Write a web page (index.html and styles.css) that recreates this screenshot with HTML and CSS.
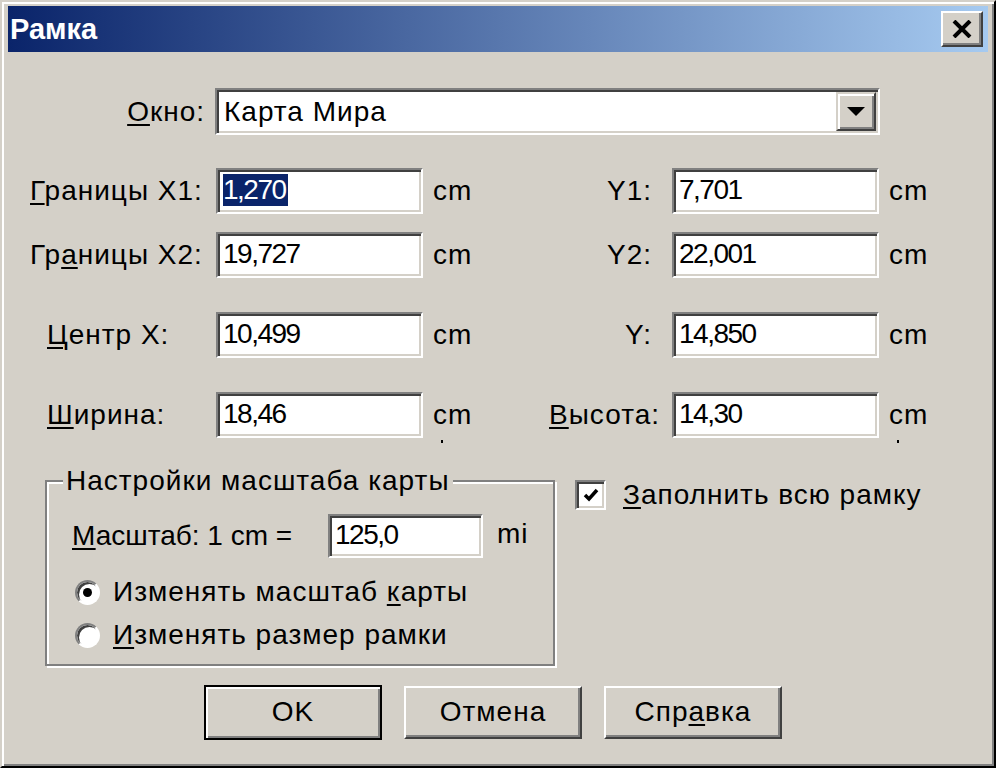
FILE: index.html
```html
<!DOCTYPE html>
<html lang="ru">
<head>
  <meta charset="UTF-8" />
  <title>Рамка</title>
  <link rel="stylesheet" href="styles.css">
</head>
<body>

  <div class="window">
    <div class="titlebar">
      <span class="title">Рамка</span>
      <span class="close-btn">
        <svg width="20" height="18" viewBox="0 0 20 18"><path d="M2 1 L18 17 M18 1 L2 17" stroke="#000" stroke-width="4"/></svg>
      </span>
    </div>

    <div class="body">
      <div class="combo-row">
        <span class="combo-label"><u>О</u>кно:</span>
        <div class="combo">
          <span class="combo-text">Карта Мира</span>
          <span class="combo-btn">
            <svg width="18" height="10" viewBox="0 0 18 10"><polygon points="0,0 18,0 9,9" fill="#000"/></svg>
          </span>
        </div>
      </div>

      <div class="row first">
        <span class="lbl"><u>Г</u>раницы X1:</span>
        <div class="field"><span class="sel">1,270</span></div>
        <span class="unit">cm</span>
        <span class="lbl-r">Y1:</span>
        <div class="field">7,701</div>
        <span class="unit">cm</span>
      </div>

      <div class="row">
        <span class="lbl">Гр<u>а</u>ницы X2:</span>
        <div class="field">19,727</div>
        <span class="unit">cm</span>
        <span class="lbl-r">Y2:</span>
        <div class="field">22,001</div>
        <span class="unit">cm</span>
      </div>

      <div class="row wide">
        <span class="lbl indent"><u>Ц</u>ентр X:</span>
        <div class="field">10,499</div>
        <span class="unit">cm</span>
        <span class="lbl-r">Y:</span>
        <div class="field">14,850</div>
        <span class="unit">cm</span>
      </div>

      <div class="row wide">
        <span class="lbl indent"><u>Ш</u>ирина:</span>
        <div class="field">18,46</div>
        <span class="unit dotted">cm</span>
        <span class="lbl-r tight"><u>В</u>ысота:</span>
        <div class="field">14,30</div>
        <span class="unit dotted">cm</span>
      </div>

      <div class="lower">
        <div class="group">
          <div class="legend">Настройки масштаба карты</div>
          <div class="scale-row">
            <span class="scale-label"><u>М</u>асштаб: 1 cm =</span>
            <div class="field small">125,0</div>
            <span class="scale-unit">mi</span>
          </div>
          <div class="radio-row first-radio">
            <span class="radio checked"></span>
            <span>Изменять масштаб <u>к</u>арты</span>
          </div>
          <div class="radio-row">
            <span class="radio"></span>
            <span><u>И</u>зменять размер рамки</span>
          </div>
        </div>

        <div class="check-row">
          <span class="checkbox">
            <svg width="16" height="14" viewBox="0 0 16 14"><polyline points="2,7 6,11 14,2" fill="none" stroke="#000" stroke-width="3.5"/></svg>
          </span>
          <span><u>З</u>аполнить всю рамку</span>
        </div>
      </div>

      <div class="buttons">
        <div class="btn default">OK</div>
        <div class="btn">Отмена</div>
        <div class="btn">Спр<u>а</u>вка</div>
      </div>
    </div>
  </div>

</body>
</html>
```

FILE: styles.css
```css
body {
  margin: 0;
  background: #000;
}

.window {
  width: 996px;
  height: 768px;
  box-sizing: border-box;
  background: #d4d0c8;
  border: 2px solid;
  border-color: #d4d0c8 #000 #000 #d4d0c8;
  box-shadow: inset 2px 2px #fff, inset -2px -2px #808080;
  padding: 4px 6px 6px 6px;
  font-family: "Liberation Sans", Arial, sans-serif;
  font-size: 28px;
  letter-spacing: 1px;
  color: #000;
}

u {
  text-decoration-thickness: 2px;
  text-underline-offset: 3px;
}

/* title bar */
.titlebar {
  height: 46px;
  display: flex;
  align-items: center;
  justify-content: space-between;
  background: linear-gradient(to right, #0a246a, #a6caf0);
}

.title {
  color: #fff;
  font-weight: bold;
  font-size: 29px;
  letter-spacing: 0;
  padding-left: 2px;
}

.close-btn {
  width: 42px;
  height: 36px;
  box-sizing: border-box;
  margin-right: 5px;
  background: #d4d0c8;
  border: 2px solid;
  border-color: #fff #404040 #404040 #fff;
  box-shadow: inset -2px -2px #808080;
  display: flex;
  align-items: center;
  justify-content: center;
}

.body {
  padding-left: 20px;
}

/* window combo */
.combo-row {
  display: flex;
  align-items: center;
  margin-top: 36px;
  height: 47px;
}

.combo-label {
  width: 187px;
  text-align: right;
  padding-right: 10px;
  box-sizing: border-box;
}

.combo {
  width: 665px;
  height: 47px;
  box-sizing: border-box;
  background: #fff;
  border: 2px solid;
  border-color: #808080 #fff #fff #808080;
  box-shadow: inset 2px 2px #404040, inset -2px -2px #d4d0c8;
  padding: 2px 2px 2px 4px;
  display: flex;
  align-items: center;
}

.combo-text {
  flex: 1;
  padding-left: 3px;
}

.combo-btn {
  width: 40px;
  height: 39px;
  box-sizing: border-box;
  background: #d4d0c8;
  border: 2px solid;
  border-color: #d4d0c8 #404040 #404040 #d4d0c8;
  box-shadow: inset 2px 2px #fff, inset -2px -2px #808080;
  display: flex;
  align-items: center;
  justify-content: center;
}

/* coordinate rows */
.row {
  display: grid;
  grid-template-columns: 188px 207px 120px 129px 207px 1fr;
  align-items: center;
  height: 46px;
  margin-top: 18px;
}

.row.first {
  margin-top: 33px;
}

.row.wide {
  margin-top: 34px;
}

.lbl {
  padding-left: 2px;
}

.lbl.indent {
  padding-left: 19px;
}

.lbl-r {
  text-align: right;
  padding-right: 20px;
}

.lbl-r.tight {
  padding-right: 12px;
}

.field {
  height: 46px;
  box-sizing: border-box;
  background: #fff;
  border: 2px solid;
  border-color: #808080 #fff #fff #808080;
  box-shadow: inset 2px 2px #404040, inset -2px -2px #d4d0c8;
  padding: 0 4px 2px 5px;
  letter-spacing: -1.5px;
  display: flex;
  align-items: center;
}

.sel {
  background: #0a246a;
  color: #fff;
  padding-right: 2px;
}

.unit {
  padding-left: 10px;
  position: relative;
}

.unit.dotted::after {
  content: "";
  position: absolute;
  left: 18px;
  bottom: -12px;
  width: 2px;
  height: 3px;
  background: #000;
}

/* lower part */
.lower {
  display: flex;
  align-items: flex-start;
  margin-top: 42px;
  margin-left: 17px;
}

.group {
  width: 510px;
  height: 186px;
  box-sizing: border-box;
  border: 2px solid #808080;
  box-shadow: inset 2px 2px #fff, 2px 2px #fff;
  padding-left: 25px;
}

.legend {
  width: fit-content;
  background: #d4d0c8;
  margin: -17px 0 0 -9px;
  padding: 0 3px;
  line-height: 32px;
}

.scale-row {
  display: flex;
  align-items: center;
  height: 44px;
  margin-top: 17px;
}

.scale-label {
  width: 256px;
  letter-spacing: 0;
}

.field.small {
  width: 155px;
  height: 44px;
}

.scale-unit {
  margin-left: 14px;
  margin-bottom: 4px;
}

.radio-row {
  display: flex;
  align-items: center;
  height: 36px;
  margin-top: 7px;
  margin-left: 3px;
}

.radio-row.first-radio {
  margin-top: 16px;
}

.radio {
  width: 25px;
  height: 25px;
  box-sizing: border-box;
  border-radius: 50%;
  background: #fff;
  border: 2px solid;
  border-color: #808080 #fff #fff #808080;
  box-shadow: inset 2px 2px #404040;
  margin-right: 13px;
  display: flex;
  align-items: center;
  justify-content: center;
}

.radio.checked::after {
  content: "";
  width: 9px;
  height: 9px;
  border-radius: 50%;
  background: #000;
}

.check-row {
  display: flex;
  align-items: center;
  margin-left: 20px;
  height: 30px;
}

.checkbox {
  width: 31px;
  height: 30px;
  box-sizing: border-box;
  background: #fff;
  border: 2px solid;
  border-color: #808080 #fff #fff #808080;
  box-shadow: inset 2px 2px #404040, inset -2px -2px #d4d0c8;
  margin-right: 17px;
  display: flex;
  align-items: center;
  justify-content: center;
}

/* dialog buttons */
.buttons {
  display: flex;
  align-items: center;
  gap: 22px;
  margin-top: 19px;
  padding-left: 176px;
}

.btn {
  width: 178px;
  height: 53px;
  box-sizing: border-box;
  border: 2px solid;
  border-color: #fff #404040 #404040 #fff;
  box-shadow: inset -2px -2px #808080;
  display: flex;
  align-items: center;
  justify-content: center;
  padding-bottom: 2px;
}

.btn.default {
  height: 55px;
  border-color: #000;
  box-shadow: inset 2px 2px #fff, inset -2px -2px #808080;
}
```
